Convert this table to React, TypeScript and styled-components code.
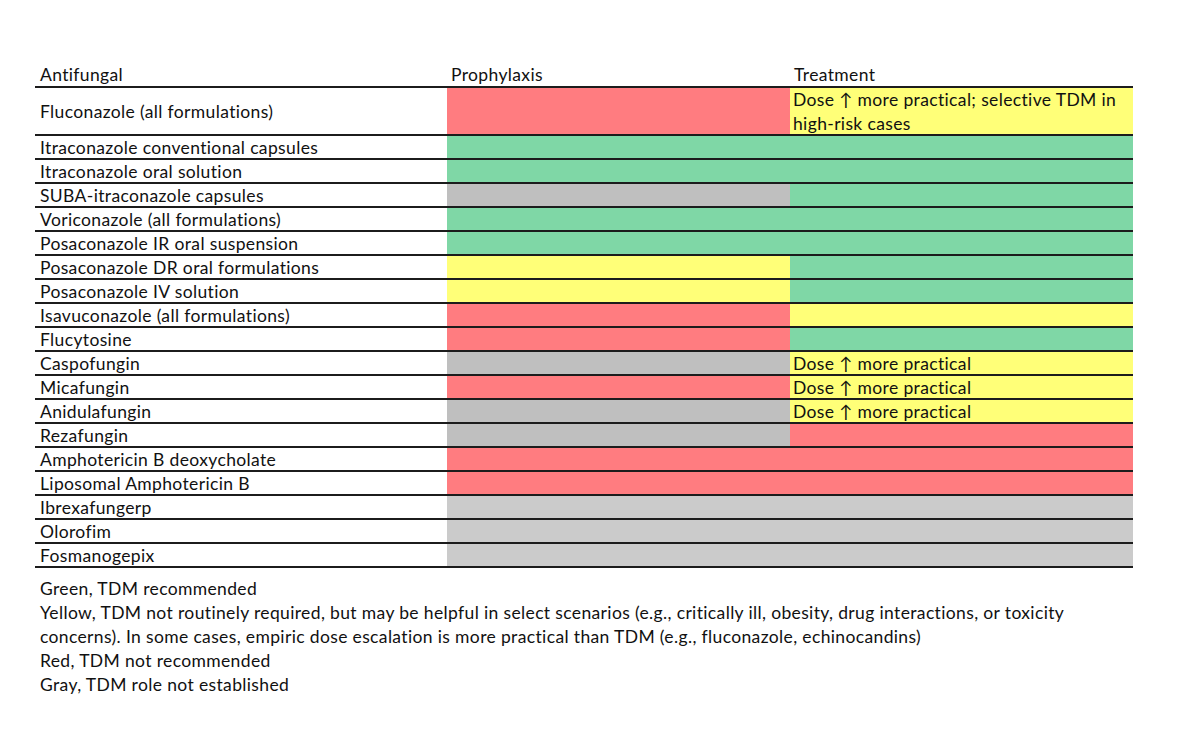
import { createGlobalStyle } from "styled-components";
import styled from "styled-components";

const GlobalStyle = createGlobalStyle`
  html, body {
    margin: 0;
    padding: 0;
    background: #ffffff;
  }
  body {
    font-family: Lato, "Liberation Sans", sans-serif;
    color: #111111;
  }
`;

const COLORS = {
  red: "#ff7c80",
  green: "#7fd7a6",
  yellow: "#ffff78",
  gray: "#bfbfbf",
  light: "#cbcbcb",
  none: "transparent",
};

type Fill = keyof typeof COLORS;

const Page = styled.div`
  width: 1200px;
  height: 729px;
  box-sizing: border-box;
  padding: 62px 0 0 35px;
  font-size: 17.5px;
  letter-spacing: 0.36px;
`;

const Table = styled.div`
  width: 1098px;
  display: flex;
  flex-direction: column;
`;

const Row = styled.div<{ $tall?: boolean; $head?: boolean }>`
  display: grid;
  grid-template-columns: 412px 343px 343px;
  grid-template-rows: minmax(0, 1fr);
  height: ${(p) => (p.$tall ? 48 : p.$head ? 26 : 24)}px;
  border-bottom: 2px solid #1c1c1c;
  box-sizing: border-box;
`;

const Cell = styled.div<{ $fill?: Fill; $span?: number; $pad?: number }>`
  grid-column: span ${(p) => p.$span || 1};
  min-height: 0;
  box-sizing: border-box;
  background: ${(p) => COLORS[p.$fill || "none"]};
  padding: 2px 0 0 ${(p) => p.$pad ?? 4}px;
  display: flex;
  align-items: center;
  line-height: 24px;
  white-space: nowrap;
`;

const NameCell = styled(Cell)`
  padding-left: 5px;
`;

const Notes = styled.div`
  padding: 9px 0 0 5px;
  line-height: 24px;
  white-space: nowrap;
`;

type Item = {
  name: string;
  cells: { fill: Fill; span?: number; text?: string }[];
  tall?: boolean;
};

const DOSE = "Dose \u2191 more practical";

const rows: Item[] = [
  {
    name: "Fluconazole (all formulations)",
    tall: true,
    cells: [
      { fill: "red" },
      { fill: "yellow", text: "Dose \u2191 more practical; selective TDM in\nhigh-risk cases" },
    ],
  },
  { name: "Itraconazole conventional capsules", cells: [{ fill: "green", span: 2 }] },
  { name: "Itraconazole oral solution", cells: [{ fill: "green", span: 2 }] },
  { name: "SUBA-itraconazole capsules", cells: [{ fill: "gray" }, { fill: "green" }] },
  { name: "Voriconazole (all formulations)", cells: [{ fill: "green", span: 2 }] },
  { name: "Posaconazole IR oral suspension", cells: [{ fill: "green", span: 2 }] },
  { name: "Posaconazole DR oral formulations", cells: [{ fill: "yellow" }, { fill: "green" }] },
  { name: "Posaconazole IV solution", cells: [{ fill: "yellow" }, { fill: "green" }] },
  { name: "Isavuconazole (all formulations)", cells: [{ fill: "red" }, { fill: "yellow" }] },
  { name: "Flucytosine", cells: [{ fill: "red" }, { fill: "green" }] },
  { name: "Caspofungin", cells: [{ fill: "gray" }, { fill: "yellow", text: DOSE }] },
  { name: "Micafungin", cells: [{ fill: "red" }, { fill: "yellow", text: DOSE }] },
  { name: "Anidulafungin", cells: [{ fill: "gray" }, { fill: "yellow", text: DOSE }] },
  { name: "Rezafungin", cells: [{ fill: "gray" }, { fill: "red" }] },
  { name: "Amphotericin B deoxycholate", cells: [{ fill: "red", span: 2 }] },
  { name: "Liposomal Amphotericin B", cells: [{ fill: "red", span: 2 }] },
  { name: "Ibrexafungerp", cells: [{ fill: "light", span: 2 }] },
  { name: "Olorofim", cells: [{ fill: "light", span: 2 }] },
  { name: "Fosmanogepix", cells: [{ fill: "light", span: 2 }] },
];

const notes = [
  "Green, TDM recommended",
  "Yellow, TDM not routinely required, but may be helpful in select scenarios (e.g., critically ill, obesity, drug interactions, or toxicity",
  "concerns). In some cases, empiric dose escalation is more practical than TDM (e.g., fluconazole, echinocandins)",
  "Red, TDM not recommended",
  "Gray, TDM role not established",
];

export default function App() {
  return (
    <Page>
      <GlobalStyle />
      <Table>
        <Row $head>
          <NameCell>Antifungal</NameCell>
          <Cell>Prophylaxis</Cell>
          <Cell>Treatment</Cell>
        </Row>
        {rows.map((r) => (
          <Row key={r.name} $tall={r.tall}>
            <NameCell>{r.name}</NameCell>
            {r.cells.map((c, i) => (
              <Cell key={i} $fill={c.fill} $span={c.span} $pad={3}>
                {c.text && <span style={{ whiteSpace: "pre" }}>{c.text}</span>}
              </Cell>
            ))}
          </Row>
        ))}
      </Table>
      <Notes>
        {notes.map((n) => (
          <div key={n}>{n}</div>
        ))}
      </Notes>
    </Page>
  );
}
